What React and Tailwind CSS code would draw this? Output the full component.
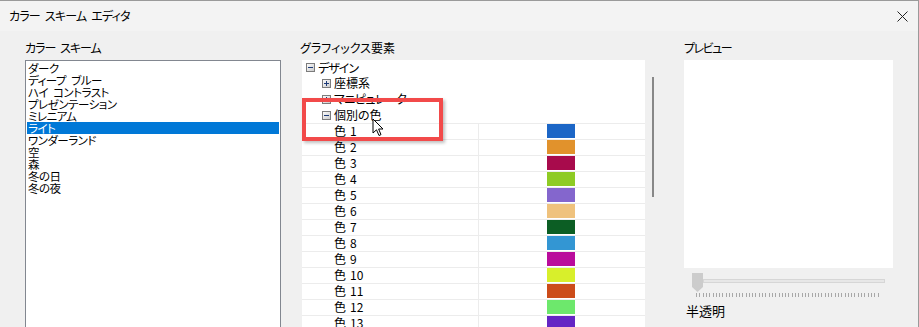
import React from "react";

const schemes = ["ダーク", "ディープ ブルー", "ハイ コントラスト", "プレゼンテーション", "ミレニアム", "ライト", "ワンダーランド", "空", "森", "冬の日", "冬の夜"];
const colors = ["#1c66c6", "#e1922c", "#a80b4c", "#8ecb24", "#8466cd", "#efc27d", "#0c5e24", "#3396d3", "#ba0c9c", "#d8ef2b", "#cc4c1a", "#6de86c", "#6425c4"];

function ExpBox({ plus }) {
  return (
    <svg width="9" height="9" viewBox="0 0 9 9" className="shrink-0">
      <defs>
        <linearGradient id={plus ? "gp" : "gm"} x1="0" y1="0" x2="1" y2="1">
          <stop offset="0" stopColor="#ffffff" />
          <stop offset="1" stopColor="#c8c8c8" />
        </linearGradient>
      </defs>
      <rect x="0.5" y="0.5" width="8" height="8" fill={`url(#${plus ? "gp" : "gm"})`} stroke="#7c7c7c" />
      <line x1="2" y1="4.5" x2="7" y2="4.5" stroke="#1d3b78" />
      {plus && <line x1="4.5" y1="2" x2="4.5" y2="7" stroke="#1d3b78" />}
    </svg>
  );
}

export default function App() {
  return (
    <div className="relative w-[919px] h-[327px] overflow-hidden bg-[#f0f0f0] border-t border-r border-[#9a9a9a] text-black font-['Noto_Sans_CJK_JP','Noto_Sans',sans-serif] [font-feature-settings:'palt'] text-[12px]">
      {/* title bar */}
      <div className="h-[30px] bg-[#f3f3f3] flex items-center justify-between pl-[9px] pr-[10px]">
        <span className="text-[12px] leading-[12px] tracking-[-0.8px] [word-spacing:3px]">カラー スキーム エディタ</span>
        <svg width="11" height="11" viewBox="0 0 11 11">
          <path d="M0.5 0.5 L10.5 10.5 M10.5 0.5 L0.5 10.5" stroke="#222" strokeWidth="1" />
        </svg>
      </div>

      {/* body */}
      <div className="flex pl-[25px] pt-[11px]">
        {/* left column */}
        <div className="w-[256px] flex flex-col">
          <div className="h-[12px] leading-[12px] tracking-[-1px] [word-spacing:3px]">カラー スキーム</div>
          <div className="mt-[6px] h-[280px] bg-white border border-[#828790] p-[1px]">
            {schemes.map((s, i) => (
              <div
                key={s}
                className={
                  i === 5
                    ? "h-[12px] leading-[12px] pl-[1px] bg-[#0078d7] text-white whitespace-nowrap text-[11.5px] tracking-[-0.5px] [word-spacing:3px]"
                    : "h-[12px] leading-[12px] pl-[1px] whitespace-nowrap text-[11.5px] tracking-[-0.5px] [word-spacing:3px]"
                }
              >
                {s}
              </div>
            ))}
          </div>
        </div>

        {/* middle column */}
        <div className="ml-[19px] w-[360px] flex flex-col">
          <div className="h-[12px] leading-[12px]">グラフィックス要素</div>
          <div className="mt-[6px] flex">
            <div className="ml-[2px] w-[343px] h-[280px] bg-white">
              <div className="h-[15px] flex items-center pl-[4px] gap-[3px]">
                <ExpBox />
                <span className="leading-[12px] tracking-[-1px]">デザイン</span>
              </div>
              <div className="h-[16px] flex items-center pl-[20px] gap-[3px]">
                <ExpBox plus />
                <span className="leading-[12px]">座標系</span>
              </div>
              <div className="h-[16px] flex items-center pl-[20px] gap-[3px]">
                <ExpBox plus />
                <span className="leading-[12px] tracking-[-0.5px]">マニピュレータ</span>
              </div>
              <div className="h-[16px] flex items-center pl-[20px] gap-[3px]">
                <ExpBox />
                <span className="leading-[12px]">個別の色</span>
              </div>
              {colors.map((c, i) => (
                <div key={i} className="h-[16px] flex border-t border-[#ececec]">
                  <div className="w-[177px] border-r border-[#ececec] pl-[32px] flex items-center leading-[12px] pb-[2px] gap-[4px]">
                    <span>色</span>
                    <span>{i + 1}</span>
                  </div>
                  <div className="flex-1 pl-[68px]">
                    <div className="w-[28px] h-[14px]" style={{ backgroundColor: c }} />
                  </div>
                </div>
              ))}
            </div>
            <div className="w-[15px]">
              <div className="ml-[7px] mt-[17px] w-[2px] h-[120px] bg-[#888888]" />
            </div>
          </div>
        </div>

        {/* right column */}
        <div className="ml-[24px] w-[209px] flex flex-col">
          <div className="h-[12px] leading-[12px] tracking-[-1.5px]">プレビュー</div>
          <div className="mt-[6px] h-[208px] bg-white" />
          <div className="mt-[5px] ml-[8px] flex items-start">
            <svg width="11" height="19" viewBox="0 0 11 19" className="shrink-0">
              <path d="M0 0 H11 V14 L5.5 19 L0 14 Z" fill="#cccccc" />
            </svg>
            <div className="mt-[6px] w-[182px] h-[4px] bg-[#e7e7e7] border border-[#d6d6d6]" />
          </div>
          <svg width="190" height="5" viewBox="0 0 190 5" className="ml-[12px] mt-[1px]">
            {Array.from({ length: 56 }).map((_, i) => (
              <line key={i} x1={0.5 + Math.round(i * 3.3)} y1="0" x2={0.5 + Math.round(i * 3.3)} y2="4" stroke="#a8a8a8" />
            ))}
          </svg>
          <div className="mt-[6px] ml-[2px] text-[13px] leading-[13px]">半透明</div>
        </div>
      </div>

      {/* red annotation box */}
      <div className="absolute left-[302px] top-[97px] w-[141px] h-[43px] border-4 border-[#f24a4a] shadow-[2px_2px_3px_rgba(0,0,0,0.25)]" />

      {/* cursor */}
      <svg className="absolute left-[372px] top-[117px]" width="13" height="19" viewBox="0 0 13 19">
        <path d="M1 1 L1 15 L4.5 11.8 L7 17.5 L9 16.6 L6.6 11 L11 11 Z" fill="#ffffff" stroke="#000000" strokeWidth="1" strokeLinejoin="round" />
      </svg>
    </div>
  );
}
